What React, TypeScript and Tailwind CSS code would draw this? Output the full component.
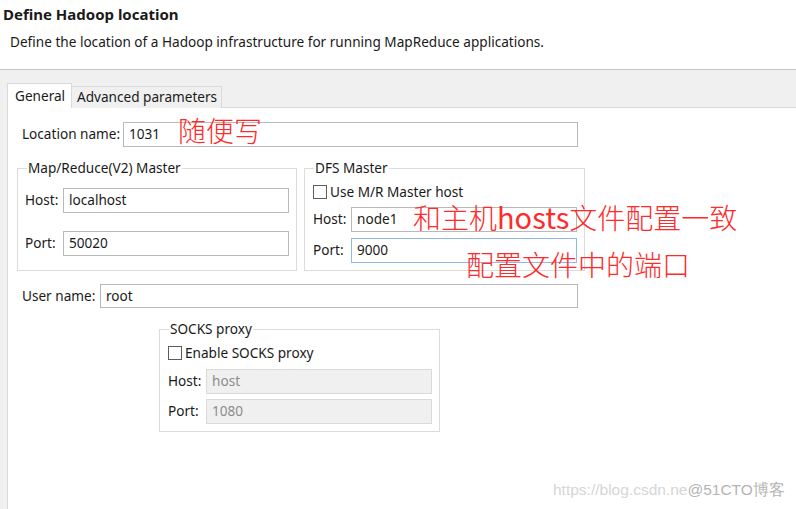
import React from "react";

function Input({ value, w, h = "h-[25px]", focused = false, disabled = false }: { value: string; w: string; h?: string; focused?: boolean; disabled?: boolean }) {
  const base = "flex items-center pl-[5px] border";
  const tone = disabled
    ? "bg-[#f0f0f0] border-[#dadada] text-[#8c8c8c]"
    : focused
    ? "bg-white border-[#8fb9e8] text-[#1a1a1a]"
    : "bg-white border-[#b9b9b9] text-[#1a1a1a]";
  return <div className={`${base} ${tone} ${w} ${h}`}>{value}</div>;
}

function Check() {
  return <div className="w-[14px] h-[14px] border border-[#5c5c5c] bg-white shrink-0" />;
}

function Group({ legend, w, children }: { legend: string; w: string; children: React.ReactNode }) {
  return (
    <div className={`relative h-[103px] border border-[#dcdcdc] ${w}`}>
      <span className="absolute -top-[10px] left-[9px] bg-white px-[1px] leading-[18px]">{legend}</span>
      {children}
    </div>
  );
}

export default function App() {
  return (
    <div className="relative w-[796px] h-[509px] overflow-hidden bg-[#f0f0f0] font-['Noto_Sans','Liberation_Sans',sans-serif] text-[13.6px] text-[#1a1a1a]">
      <header className="h-[70px] bg-white border-b border-[#c4c4c4] pl-[3px]">
        <h1 className="pt-[4px] text-[15px] font-bold leading-[20px]">Define Hadoop location</h1>
        <p className="mt-[8px] pl-[7px] leading-[20px]">
          Define the location of a Hadoop infrastructure for running MapReduce applications.
        </p>
      </header>

      <div className="pl-[7px] pt-[13px]">
        <div className="flex items-end h-[25px]">
          <div className="relative z-10 h-[25px] w-[65px] bg-white border border-b-0 border-[#d9d9d9] pl-[7px] pt-[2px] leading-[20px]">
            General
          </div>
          <div className="h-[22px] w-[150px] bg-[#f0f0f0] border border-l-0 border-b-0 border-[#d9d9d9] pl-[5px] leading-[20px]">
            Advanced parameters
          </div>
        </div>

        <div className="-mt-px w-[800px] h-[420px] bg-white border border-[#d9d9d9] pl-[9px] pt-[14px]">
          <div className="flex items-center h-[25px] pl-[5px]">
            <span className="w-[101px]">Location name:</span>
            <Input value="1031" w="w-[455px]" />
          </div>

          <div className="mt-[21px] flex gap-[7px]">
            <Group legend="Map/Reduce(V2) Master" w="w-[280px]">
              <div className="pt-[19px] pl-[7px]">
                <div className="flex items-center">
                  <span className="w-[38px]">Host:</span>
                  <Input value="localhost" w="w-[226px]" />
                </div>
                <div className="mt-[18px] flex items-center">
                  <span className="w-[38px]">Port:</span>
                  <Input value="50020" w="w-[226px]" />
                </div>
              </div>
            </Group>
            <Group legend="DFS Master" w="w-[281px]">
              <div className="pt-[16px] pl-[8px]">
                <div className="flex items-center gap-[3px] h-[14px]">
                  <Check />
                  <span>Use M/R Master host</span>
                </div>
                <div className="mt-[8px] flex items-center">
                  <span className="w-[38px]">Host:</span>
                  <Input value="node1" w="w-[226px]" />
                </div>
                <div className="mt-[6px] flex items-center">
                  <span className="w-[38px]">Port:</span>
                  <Input value="9000" w="w-[226px]" focused />
                </div>
              </div>
            </Group>
          </div>

          <div className="mt-[13px] flex items-center h-[24px] pl-[5px]">
            <span className="w-[78px]">User name:</span>
            <Input value="root" w="w-[478px]" h="h-[24px]" />
          </div>

          <div className="mt-[21px] ml-[142px]">
            <Group legend="SOCKS proxy" w="w-[281px]">
              <div className="pt-[16px] pl-[8px]">
                <div className="flex items-center gap-[3px] h-[14px]">
                  <Check />
                  <span>Enable SOCKS proxy</span>
                </div>
                <div className="mt-[9px] flex items-center">
                  <span className="w-[38px]">Host:</span>
                  <Input value="host" w="w-[226px]" disabled />
                </div>
                <div className="mt-[5px] flex items-center">
                  <span className="w-[38px]">Port:</span>
                  <Input value="1080" w="w-[226px]" disabled />
                </div>
              </div>
            </Group>
          </div>
        </div>
      </div>

      <div className="absolute left-[178px] top-[114px] text-[28px] leading-[32px] text-[#ff2a2a] font-['Noto_Sans_CJK_SC',sans-serif] font-light">
        随便写
      </div>
      <div className="absolute left-[413px] top-[200px] text-[28px] leading-[32px] text-[#ff2a2a] font-['Noto_Sans_CJK_SC',sans-serif] font-light">
        和主机<span className="font-normal text-[29px]">hosts</span>文件配置一致
      </div>
      <div className="absolute left-[466px] top-[248px] text-[28px] leading-[32px] text-[#ff2a2a] font-['Noto_Sans_CJK_SC',sans-serif] font-light">
        配置文件中的端口
      </div>

      <div className="absolute left-[553px] top-[480px] text-[15.5px] leading-[20px] font-['Liberation_Sans',sans-serif]">
        <span className="text-[#d6d6d6]">https://blog.csdn.ne</span>
        <span className="text-[#b4b4b4]">@51CTO博客</span>
      </div>
    </div>
  );
}
